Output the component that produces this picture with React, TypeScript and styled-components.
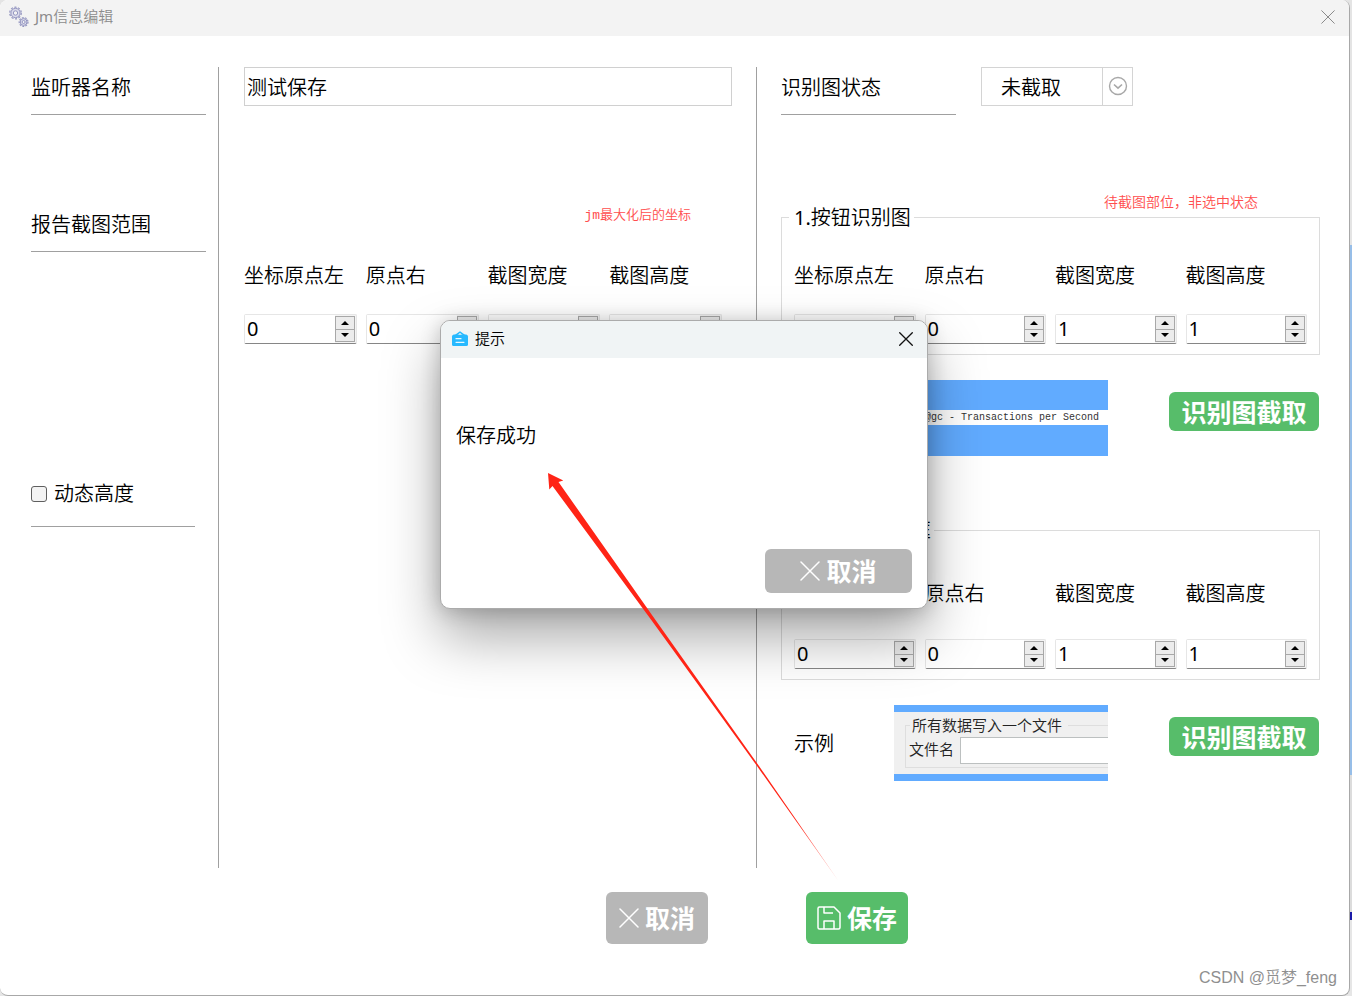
import React, { useState } from "react";
import styled, { createGlobalStyle } from "styled-components";

const GlobalStyle = createGlobalStyle`
  * { box-sizing: border-box; }
  body {
    margin: 0;
    background: linear-gradient(
      #e4e4e4 245px, #97bee8 245px, #97bee8 775px,
      #dcdcdc 775px, #dcdcdc 912px, #1a1aa8 912px, #1a1aa8 920px, #e6e6e6 920px
    );
    font-family: "Noto Sans", "Noto Sans CJK SC", sans-serif;
    font-size: 20px;
    font-weight: 350;
    line-height: 30px;
    color: #000;
  }
  button, input, select { font: inherit; color: inherit; }
`;

const Window = styled.div`
  position: relative;
  display: flex;
  flex-direction: column;
  min-height: 100vh;
  margin-right: 2px;
  background: #fff;
  border: solid #a8a8a8;
  border-width: 0 1px 1px 0;
  border-radius: 8px;
  overflow: hidden;
`;

const TitleBar = styled.header`
  display: flex;
  align-items: center;
  height: 36px;
  padding: 0 14px 3px 8px;
  gap: 5px;
  background: #f3f3f3;
  font-size: 15px;
  color: #8c8c8c;
`;

const Title = styled.h1`
  margin: 0;
  padding-bottom: 2px;
  flex: 1;
  font-size: 15px;
  font-weight: 350;
`;

const Latin = styled.span`
  font-weight: 400;
`;

const IconButton = styled.button`
  display: flex;
  padding: 0;
  border: 0;
  background: none;
  cursor: pointer;
`;

const Columns = styled.main`
  display: grid;
  flex: 1;
  grid-template-columns: 188px minmax(0, 538fr) minmax(0, 563fr);
  padding: 31px 29px 0 31px;
`;

const Column = styled.section<{ $pad: string; $divided?: boolean }>`
  padding: ${(p) => p.$pad};
  border-right: ${(p) => (p.$divided ? "1px solid #a0a0a0" : "0")};
`;

const Caption = styled.label<{ $space?: number }>`
  display: block;
  width: 175px;
  height: 48px;
  margin-top: ${(p) => p.$space ?? 0}px;
  border-bottom: 1px solid #a0a0a0;
  line-height: 42px;
`;

const CheckCaption = styled.label`
  display: flex;
  align-items: center;
  gap: 7px;
  width: 164px;
  height: 53px;
  margin-top: 222px;
  padding-bottom: 12px;
  border-bottom: 1px solid #a0a0a0;
`;

const CheckBox = styled.input`
  appearance: none;
  width: 16px;
  height: 16px;
  margin: 0;
  border: 1px solid #5f5f5f;
  border-radius: 3px;
  background: #f3f3f3;
  &:checked { background: #57bd6a; }
`;

const NameInput = styled.input`
  display: block;
  width: 100%;
  height: 39px;
  padding: 0 2px;
  border: 1px solid #d0d0d0;
  outline: 0;
`;

const Note = styled.p<{ $top: number; $right: number; $size: number }>`
  margin: ${(p) => p.$top}px 0 0;
  padding-right: ${(p) => p.$right}px;
  font-family: "Liberation Mono", "Noto Sans CJK SC", monospace;
  font-size: ${(p) => p.$size}px;
  line-height: 16px;
  text-align: right;
  color: #ff4d4d;
`;

const FieldGrid = styled.div`
  display: grid;
  grid-template-columns: repeat(4, minmax(0, 1fr));
  column-gap: 9px;
  white-space: nowrap;
`;

const Field = styled.div<{ $gap: number }>`
  display: flex;
  flex-direction: column;
  gap: ${(p) => p.$gap}px;
`;

const RangeArea = styled.div`
  padding: 37px 10px 0 0;
`;

const Spin = styled.div`
  display: flex;
  height: 30px;
  background: #f4f4f4;
  border: 1px solid #e6e6e6;
  border-bottom-color: #868686;
  border-radius: 2px;
`;

const SpinInput = styled.input`
  flex: 1;
  min-width: 0;
  padding: 0 2px;
  border: 0;
  outline: 0;
  background: transparent;
  background: #fff;
  font-weight: 400;
  appearance: textfield;
  &::-webkit-inner-spin-button { appearance: none; margin: 0; }
`;

const Stepper = styled.div`
  display: grid;
  width: 20px;
  margin: 1px 1px 1px 0;
  border: 1px solid #a8a8a8;
`;

const StepButton = styled.button`
  display: flex;
  align-items: center;
  justify-content: center;
  padding: 0;
  border: 0;
  background: #ececec;
  & + & { border-top: 1px solid #a8a8a8; }
`;

const StatusRow = styled.div`
  display: flex;
  align-items: flex-start;
  gap: 25px;
`;

const SelectBox = styled.div`
  display: grid;
  grid-template-columns: 1fr 30px;
  width: 152px;
  height: 39px;
  border: 1px solid #d4d4d4;
`;

const StatusSelect = styled.select`
  grid-area: 1 / 1 / 2 / 3;
  appearance: none;
  padding: 2px 0 0 19px;
  border: 0;
  outline: 0;
  background: transparent;
`;

const SelectArrow = styled.span`
  grid-area: 1 / 2;
  display: flex;
  align-items: center;
  justify-content: center;
  padding-bottom: 1px;
  border-left: 1px solid #d4d4d4;
  pointer-events: none;
`;

const Group = styled.fieldset<{ $above: number; $inner: number }>`
  min-width: 0;
  margin: ${(p) => p.$above}px 0 0;
  padding: ${(p) => p.$inner}px 12px 10px;
  border: 1px solid #dcdcdc;
`;

const Legend = styled.legend`
  margin-left: -5px;
  padding: 2px 3px 0 5px;
  line-height: 10px;
`;

const SampleRow = styled.div`
  display: grid;
  grid-template-columns: 100px 214px 211px;
  align-items: center;
  height: 76px;
  margin: 25px 0 0 13px;
`;

const SampleLabel = styled.span`
  padding-top: 2px;
`;

const SampleAction = styled.div`
  align-self: start;
  padding-top: 12px;
  margin-left: 61px;
`;

const BandSample = styled.div`
  height: 76px;
  border: solid #61abff;
  border-width: 30px 0 31px;
  padding-right: 9px;
  font-family: "Liberation Mono", monospace;
  font-size: 10px;
  line-height: 15px;
  text-align: right;
  color: #333;
`;

const FileSample = styled.div`
  height: 76px;
  padding: 13px 0 6px 11px;
  overflow: hidden;
  border: solid #61abff;
  border-width: 7px 0;
  background: #f0f0f0;
  font-size: 15px;
  color: #222;
`;

const FileGroup = styled.div`
  height: 43px;
  border: 1px solid #dedede;
  border-right: 0;
`;

const FileLegend = styled.div`
  width: 158px;
  height: 12px;
  margin: -1px 0 0 4px;
  padding-left: 2px;
  background: #f0f0f0;
  line-height: 0;
`;

const FileLine = styled.div`
  display: flex;
  gap: 6px;
  height: 27px;
  padding-left: 3px;
  line-height: 24px;
`;

const FileBox = styled.span`
  flex: 1;
  height: 27px;
  border: 1px solid #bcc0c0;
  border-right: 0;
  background: #fff;
`;

const ActionButton = styled.button<{ $tone: "green" | "gray"; $w: number; $h: number }>`
  display: flex;
  align-items: center;
  justify-content: center;
  gap: 6px;
  width: ${(p) => p.$w}px;
  height: ${(p) => p.$h}px;
  padding: 0;
  border: 0;
  border-radius: 6px;
  background: ${(p) => (p.$tone === "green" ? "#57bd6a" : "#b7b7b7")};
  color: #fff;
  font-size: 25px;
  font-weight: 700;
  white-space: nowrap;
  cursor: pointer;
`;

const Footer = styled.footer`
  display: flex;
  justify-content: center;
  gap: 98px;
  padding: 24px 0 51px 165px;
`;

const Dialog = styled.div`
  position: absolute;
  top: 320px;
  left: 440px;
  display: flex;
  flex-direction: column;
  width: 488px;
  height: 289px;
  overflow: hidden;
  border: 1px solid #ababab;
  border-radius: 10px;
  background: #fff;
  box-shadow: 0 28px 56px rgba(0, 0, 0, 0.34), 0 2px 20px rgba(0, 0, 0, 0.2);
`;

const DialogBar = styled.header`
  display: flex;
  align-items: center;
  gap: 6px;
  height: 37px;
  padding: 0 14px 2px 10px;
  background: #f0f4f5;
`;

const DialogTitle = styled.h2`
  flex: 1;
  margin: 0;
  padding-bottom: 1px;
  font-size: 15px;
  font-weight: 350;
`;

const Message = styled.p`
  flex: 1;
  margin: 0;
  padding: 63px 15px 0;
`;

const DialogActions = styled.div`
  display: flex;
  justify-content: flex-end;
  padding: 0 15px 15px;
`;

const Arrow = styled.svg`
  position: absolute;
  top: 470px;
  left: 540px;
  pointer-events: none;
`;

const Watermark = styled.div`
  position: absolute;
  right: 12px;
  bottom: 2px;
  font-family: "Liberation Sans", "Noto Sans CJK SC", sans-serif;
  font-size: 16px;
  color: #8f8f8f;
`;

const Cross = ({ size, color, width = 1 }: { size: number; color: string; width?: number }) => (
  <svg width={size} height={size} viewBox="0 0 20 20" fill="none" stroke={color} strokeWidth={(width * 20) / size}>
    <path d="M1 1 19 19M19 1 1 19" strokeLinecap="round" />
  </svg>
);

const Gears = () => (
  <svg width="22" height="22" viewBox="0 0 22 22" fill="none" stroke="#9395c0">
    <circle cx="7.5" cy="7" r="4.6" fill="#dcdcec" />
    <circle cx="7.5" cy="7" r="5.8" strokeWidth="1.2" strokeDasharray="2.2 1.44" />
    <circle cx="7.5" cy="7" r="2.2" fill="#f3f3f3" />
    <circle cx="15.6" cy="16" r="3.4" fill="#dcdcec" />
    <circle cx="15.6" cy="16" r="4.4" strokeWidth="1.2" strokeDasharray="1.9 1.17" />
    <circle cx="15.6" cy="16" r="1.5" fill="#f3f3f3" />
  </svg>
);

const Badge = () => (
  <svg width="18" height="16" viewBox="0 0 18 16" fill="none">
    <path d="M4.5 4.400 9 1.200l4.500 3.200" stroke="#27b9ff" strokeWidth="1.5" />
    <path d="M1 5.500Q1 3.600 2.800 3.400h12.400Q17 3.600 17 5.500v7.900q0 1.600-1.600 1.600H2.600Q1 15 1 13.400Z" fill="#27b9ff" />
    <path d="M7.400 3.600 9 2.500l1.600 1.100Z" fill="#f0f4f5" />
    <path d="M5 7.700h5M5 11.300h8" stroke="#e8f8ff" strokeWidth="1.200" strokeLinecap="round" />
  </svg>
);

const Floppy = () => (
  <svg width="24" height="24" viewBox="0 0 24 24" fill="none" stroke="#fff" strokeWidth="1.500" strokeLinejoin="round">
    <path d="M2.500 1H17l6 6V21.500q0 1.500-1.500 1.500h-19Q1 23 1 21.500V2.500Q1 1 2.500 1Z" />
    <path d="M7 1v6h9M7 23v-8h10v8" />
  </svg>
);

const Triangle = ({ down }: { down?: boolean }) => (
  <svg width="8" height="4" viewBox="0 0 8 4">
    <path d={down ? "M0 0h8L4 4Z" : "M0 4h8L4 0Z"} />
  </svg>
);

function Spinner({ id, start }: { id: string; start: number }) {
  const [value, setValue] = useState(start);
  return (
    <Spin>
      <SpinInput id={id} type="number" value={value} onChange={(e) => setValue(Number(e.target.value))} />
      <Stepper>
        <StepButton type="button" aria-label="增加" onClick={() => setValue(value + 1)}>
          <Triangle />
        </StepButton>
        <StepButton type="button" aria-label="减少" onClick={() => setValue(value - 1)}>
          <Triangle down />
        </StepButton>
      </Stepper>
    </Spin>
  );
}

const fieldNames = ["坐标原点左", "原点右", "截图宽度", "截图高度"];

const CoordFields = ({ prefix, values, gap }: { prefix: string; values: number[]; gap: number }) => (
  <FieldGrid>
    {fieldNames.map((name, i) => (
      <Field key={name} $gap={gap}>
        <label htmlFor={`${prefix}-${i}`}>{name}</label>
        <Spinner id={`${prefix}-${i}`} start={values[i]} />
      </Field>
    ))}
  </FieldGrid>
);

export default function App() {
  const [open, setOpen] = useState(true);
  return (
    <>
      <GlobalStyle />
      <Window>
        <TitleBar>
          <Gears />
          <Title><Latin>Jm</Latin>信息编辑</Title>
          <IconButton type="button" aria-label="关闭窗口">
            <Cross size={14} color="#8a8a8a" />
          </IconButton>
        </TitleBar>

        <Columns>
          <Column $pad="0" $divided>
            <Caption htmlFor="name">监听器名称</Caption>
            <Caption as="div" $space={89}>报告截图范围</Caption>
            <CheckCaption>
              <CheckBox type="checkbox" />
              动态高度
            </CheckCaption>
          </Column>

          <Column $pad="0 24px 0 25px" $divided>
            <NameInput id="name" defaultValue="测试保存" />
            <Note $top={102} $right={41} $size={13}>jm最大化后的坐标</Note>
            <RangeArea>
              <CoordFields prefix="report" values={[0, 0, 1, 1]} gap={23} />
            </RangeArea>
          </Column>

          <Column $pad="0 0 0 24px">
            <StatusRow>
              <Caption htmlFor="status">识别图状态</Caption>
              <SelectBox>
                <StatusSelect id="status" defaultValue="none">
                  <option value="none">未截取</option>
                  <option value="done">已截取</option>
                </StatusSelect>
                <SelectArrow>
                  <svg width="20" height="20" viewBox="0 0 20 20" fill="none" stroke="#a8a8a8" strokeWidth="1.400">
                    <circle cx="10" cy="10" r="8.500" />
                    <path d="M6 8.500 10 12.200l4-3.700" strokeWidth="1.600" />
                  </svg>
                </SelectArrow>
              </SelectBox>
            </StatusRow>

            <Note $top={80} $right={62} $size={14}>待截图部位，非选中状态</Note>
            <Group $above={0} $inner={38}>
              <Legend><Latin>1.</Latin>按钮识别图</Legend>
              <CoordFields prefix="button" values={[0, 0, 1, 1]} gap={23} />
            </Group>
            <SampleRow>
              <SampleLabel>示例</SampleLabel>
              <BandSample>jp@gc - Transactions per Second</BandSample>
              <SampleAction>
                <ActionButton type="button" $tone="green" $w={150} $h={39}>识别图截取</ActionButton>
              </SampleAction>
            </SampleRow>

            <Group $above={68} $inner={43}>
              <Legend><Latin>2.</Latin>文件名输入框</Legend>
              <CoordFields prefix="file" values={[0, 0, 1, 1]} gap={30} />
            </Group>
            <SampleRow>
              <SampleLabel>示例</SampleLabel>
              <FileSample>
                <FileGroup>
                  <FileLegend>所有数据写入一个文件</FileLegend>
                  <FileLine>
                    文件名
                    <FileBox />
                  </FileLine>
                </FileGroup>
              </FileSample>
              <SampleAction>
                <ActionButton type="button" $tone="green" $w={150} $h={39}>识别图截取</ActionButton>
              </SampleAction>
            </SampleRow>
          </Column>
        </Columns>

        <Footer>
          <ActionButton type="button" $tone="gray" $w={102} $h={52}>
            <Cross size={20} color="#fff" width={1.5} />
            取消
          </ActionButton>
          <ActionButton type="button" $tone="green" $w={102} $h={52} onClick={() => setOpen(true)}>
            <Floppy />
            保存
          </ActionButton>
        </Footer>

        <Watermark>CSDN @觅梦_feng</Watermark>

        {open && (
          <Dialog role="dialog" aria-labelledby="dialog-title">
            <DialogBar>
              <Badge />
              <DialogTitle id="dialog-title">提示</DialogTitle>
              <IconButton type="button" aria-label="关闭" onClick={() => setOpen(false)}>
                <Cross size={14} color="#111" width={1.3} />
              </IconButton>
            </DialogBar>
            <Message>保存成功</Message>
            <DialogActions>
              <ActionButton type="button" $tone="gray" $w={147} $h={44} onClick={() => setOpen(false)}>
                <Cross size={20} color="#fff" width={1.5} />
                取消
              </ActionButton>
            </DialogActions>
          </Dialog>
        )}

        <Arrow width="304" height="416" viewBox="540 470 304 416" aria-hidden="true">
          <defs>
            <linearGradient id="fade" gradientUnits="userSpaceOnUse" x1="548" y1="473" x2="838" y2="881">
              <stop offset="0.850" stopColor="#ff2416" />
              <stop offset="1" stopColor="#ff2416" stopOpacity="0.400" />
            </linearGradient>
          </defs>
          <path d="M548 473 563.300 480.500 558.500 482 655.500 620 759 766 838.500 881 757 766 651.300 620 552.500 486 549.300 489.500Z" fill="url(#fade)" />
        </Arrow>
      </Window>
    </>
  );
}
